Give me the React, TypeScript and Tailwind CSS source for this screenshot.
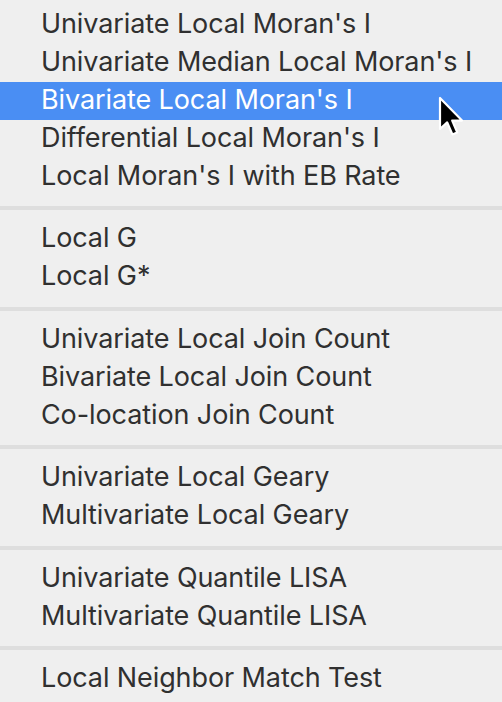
import React from 'react';

type Group = string[];

const groups: Group[] = [
  [
    "Univariate Local Moran's I",
    "Univariate Median Local Moran's I",
    "Bivariate Local Moran's I",
    "Differential Local Moran's I",
    "Local Moran's I with EB Rate",
  ],
  ['Local G', 'Local G*'],
  ['Univariate Local Join Count', 'Bivariate Local Join Count', 'Co-location Join Count'],
  ['Univariate Local Geary', 'Multivariate Local Geary'],
  ['Univariate Quantile LISA', 'Multivariate Quantile LISA'],
  ['Local Neighbor Match Test'],
];

const ACTIVE = "Bivariate Local Moran's I";

function Cursor() {
  return (
    <svg className="absolute left-[438px] top-[96px]" width="30" height="42" viewBox="0 0 15 21">
      <path
        d="M1 1 L1 16.5 L4.6 13.2 L7.2 19.2 L9.6 18.2 L7.1 12.3 L12 12.3 Z"
        fill="#000"
        stroke="#fff"
        strokeWidth="1.1"
        strokeLinejoin="round"
      />
    </svg>
  );
}

export default function App() {
  return (
    <div
      className="relative w-[502px] h-[702px] overflow-hidden bg-[#efefef] pt-[5.5px] text-[27px] tracking-[-0.1px] text-[#303030]"
      style={{ fontFamily: 'Inter, "Liberation Sans", sans-serif' }}
    >
      {groups.map((g, gi) => (
        <div key={gi}>
          {gi > 0 && <div className="mt-[10.5px] mb-[10px] h-[4px] bg-[#dedede]" />}
          {g.map(item => (
            <div
              key={item}
              className={
                'h-[38px] flex items-center pl-[41px] pb-[3px] whitespace-nowrap leading-none ' +
                (item === ACTIVE ? 'bg-[#4a8ef3] text-white' : '')
              }
            >
              {item}
            </div>
          ))}
        </div>
      ))}
      <Cursor />
    </div>
  );
}
